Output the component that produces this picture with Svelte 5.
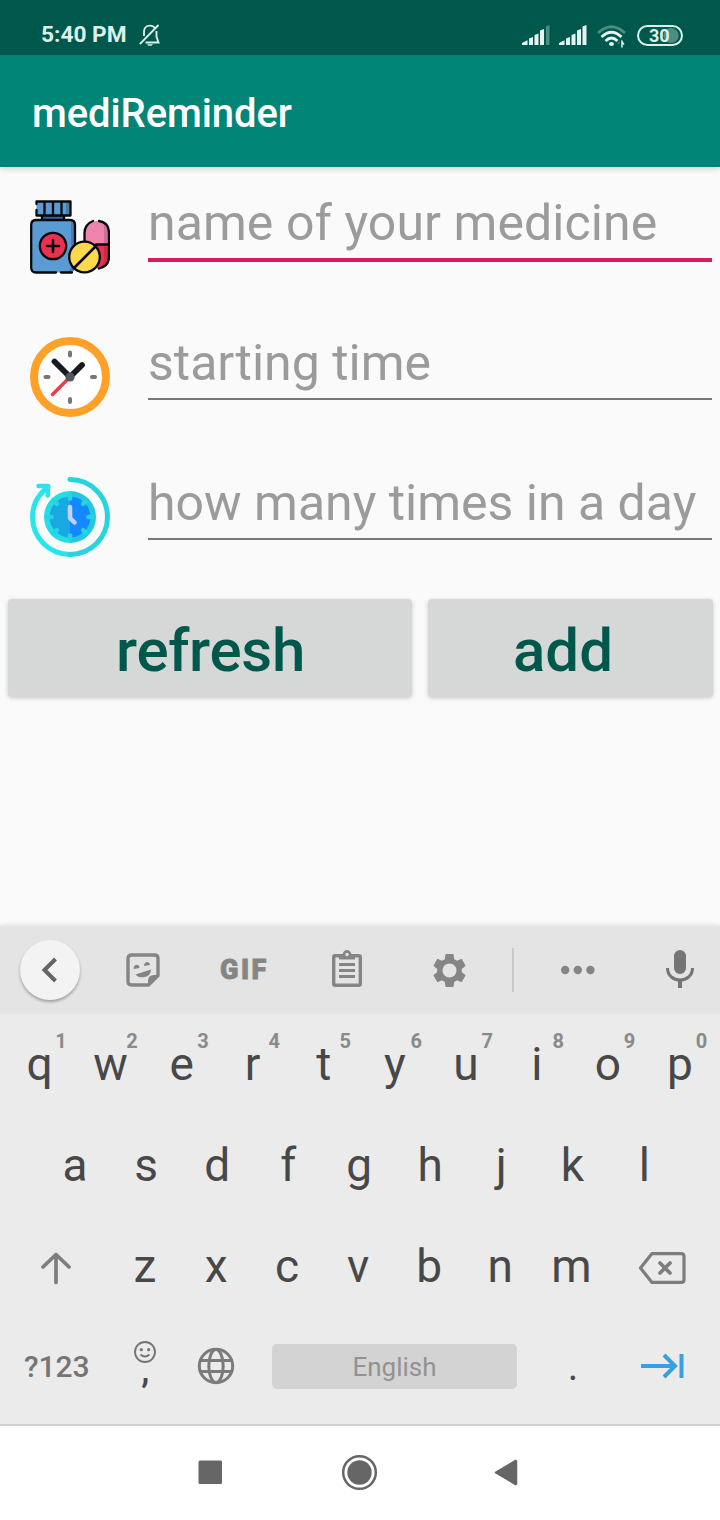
<script>
  const topKeys = [...'qwertyuiop'].map((letter, i) => ({ letter, digit: (i + 1) % 10 }));
  const homeKeys = [...'asdfghjkl'];
  const lowerKeys = [...'zxcvbnm'];
</script>

<div class="screen">
  <header class="status">
    <span class="time">5:40 PM</span>
    <svg class="bell" width="24" height="24" viewBox="0 0 24 24" fill="none" stroke="#dcefea" stroke-width="1.9">
      <path d="M17 5.2C15.8 3.4 14.100 2.600 12 2.600C8.100 2.600 6 5.400 6 9V13" />
      <path d="M18.500 8V13.500L20.500 19.500H7.500" />
      <path d="M1.800 21.200L20.500 2" />
      <path d="M9 21.300H15L13.500 22.700H10.500Z" fill="#dcefea" stroke="none" />
    </svg>
    <span class="space"></span>
    <svg width="28" height="21" viewBox="0 0 28 21" fill="#e4f5f1">
      <path d="M0 20V18L5.500 15.200V20ZM7 20V13.500L11 12V20ZM12.500 20V10L16.500 8.500V20ZM18 20V5.500L22 4V20Z" />
      <path d="M24 20V1.500L27.500 0V20Z" fill="#4b8d81" />
    </svg>
    <svg class="signal" width="28" height="21" viewBox="0 0 28 21" fill="#e4f5f1">
      <path d="M0 20V18L5.500 15.200V20ZM7 20V13.500L11 12V20ZM12.500 20V10L16.500 8.500V20ZM18 20V5.500L22 4V20ZM23.500 20V1.500L27.500 0V20Z" />
    </svg>
    <svg class="wifi" width="29" height="23" viewBox="0 0 29 23" fill="none" stroke="#e4f5f1" stroke-width="2.800">
      <path d="M1 8Q14.500-4.500 28 8" stroke="#4b8d81" />
      <path d="M4.500 12Q14.500 2.500 24.500 12M8.500 16Q14.500 10 20.500 16" />
      <ellipse cx="14.500" cy="19" rx="2.500" ry="2.100" fill="#e4f5f1" stroke="none" />
      <path d="M22.500 15.500L20.500 19H22.500Z" fill="#4b8d81" stroke="none" />
      <path d="M25 15.500V22.500V17L27 19.500" stroke-width="1.500" />
    </svg>
    <span class="battery">30</span>
  </header>

  <div class="appbar"><h1>mediReminder</h1></div>

  <main>
    <div class="entry">
      <svg width="80" height="80" viewBox="0 0 80 80" stroke="#07080c" stroke-width="2.300" stroke-linecap="round" stroke-linejoin="round">
        <rect x="12" y="18" width="22" height="6" fill="#445da3" />
        <path d="M6.500 4.500H40V18.500H6.500Z" fill="#5a9bd4" stroke="none" />
        <path d="M36 4H40.500V18.500H36Z" fill="#437fae" stroke="none" />
        <path d="M6.500 7V4.500H40.500V18.500H6.500V13M14.500 4.500V18M23 4.500V18M31.500 4.500V18" fill="none" />
        <rect x="1.200" y="23" width="43.800" height="52.500" rx="5" fill="#5a9bd4" stroke="none" />
        <path d="M41 24Q45 25 45 29V70Q45 75 40 75H37Q41 73 41 69Z" fill="#437fae" stroke="none" />
        <path d="M26 75.500H6Q1.200 75.500 1.200 70.500V28Q1.200 23 6 23H40Q45 23 45 28V51M31 75.500H42" fill="none" />
        <circle cx="23" cy="49" r="13.200" fill="#ec304f" />
        <path d="M23 43V55M17 49H29" stroke-width="2.600" />
        <path d="M54.500 47V34Q55.500 24 67 24Q79 24 79 36V60Q79 70 70 72L54.500 60Z" fill="#ee83ac" stroke="none" />
        <path d="M54.500 47H79V60Q79 71 68 72Z" fill="#ec304f" stroke="none" />
        <path d="M74 27Q79 30 79 37V60Q79 70 69 71Q76 66 74 57Z" fill="#111422" fill-opacity=".16" stroke="none" />
        <path d="M54.500 46V36C54.500 29 58 26 63 24M69 24C76 25 79 29 79 36V60C79 67 75 70 69 71.500M66 47.500H78" fill="none" />
        <circle cx="54.500" cy="60" r="15.300" fill="#fbd94b" />
        <path d="M44 71L66 49" stroke-width="2.700" />
      </svg>
      <div class="field active">name of your medicine</div>
    </div>
    <div class="entry">
      <svg width="80" height="80" viewBox="0 0 80 80" fill="none" stroke-linecap="round">
        <circle cx="40" cy="40" r="36" fill="#fff" stroke="#ffa028" stroke-width="8" />
        <g fill="#77777a">
          <rect x="38" y="13.500" width="4" height="7" rx="2" />
          <rect x="38" y="60" width="4" height="7" rx="2" />
          <rect x="13.500" y="38" width="7" height="4" rx="2" />
          <rect x="60" y="38" width="7" height="4" rx="2" />
        </g>
        <path d="M24.500 24.500L40 40L52 28" stroke="#171b20" stroke-width="5.800" />
        <path d="M22.500 57.500L39 41" stroke="#e3404c" stroke-width="3.500" />
        <circle cx="40" cy="40" r="4.600" fill="#55565a" />
      </svg>
      <div class="field">starting time</div>
    </div>
    <div class="entry">
      <svg width="80" height="80" viewBox="0 0 80 80" fill="none" stroke-linecap="round">
        <path d="M18 9.500L12 15.500C6 22 2.500 30 2.500 40A37.500 37.500 0 0 0 40 77.500" stroke="#26e5ef" stroke-width="5" />
        <path d="M40 2.500A37.500 37.500 0 0 1 40 77.500" stroke="#26d5df" stroke-width="5" />
        <path d="M8.500 9H17.800V18.500" stroke="#26e5ef" stroke-width="4.500" stroke-linejoin="round" />
        <path d="M40 14A26 26 0 0 0 40 66Z" fill="#26dce6" />
        <path d="M40 14A26 26 0 0 1 40 66Z" fill="#24c9de" />
        <path d="M40 19.500A20.500 20.500 0 0 0 40 60.500Z" fill="#18a9e5" />
        <path d="M40 19.500A20.500 20.500 0 0 1 40 60.500Z" fill="#1688ff" />
        <g stroke="#25d5e2" stroke-width="4.600">
          {#each [0, 45, 90, 135, 180, 225, 270, 315] as angle}
            <path d="M40 18V21.500" transform="rotate({angle} 40 40)" />
          {/each}
        </g>
        <path d="M40 30V41L44.500 45.500" stroke="#c7d2fa" stroke-width="4.500" stroke-linejoin="round" />
      </svg>
      <div class="field">how many times in a day</div>
    </div>
    <div class="actions">
      <button class="refresh">refresh</button>
      <button class="add">add</button>
    </div>
  </main>

  <section class="keyboard">
    <div class="tools">
      <span class="back">
        <svg width="60" height="60" viewBox="0 0 60 60" fill="none" stroke="#656565" stroke-width="4"><path d="M35.500 19L24.500 30L35.500 41" /></svg>
      </span>
      <svg class="sticker" width="34" height="34" viewBox="0 0 34 34" fill="#858585">
        <path d="M5.500 2H28.500Q32 2 32 5.500V22.500L22.500 32H5.500Q2 32 2 28.500V5.500Q2 2 5.500 2Z" fill="none" stroke="#858585" stroke-width="3.400" />
        <path d="M22 33V28Q22 22 28 22H33ZM9.500 21.500L25 16.500C25 25 13.500 26.500 9.500 21.500ZM7.500 16C7.500 10.500 13.500 10.500 13.500 15ZM18 13C18 7.500 24 8 24 12Z" />
      </svg>
      <span class="gif">GIF</span>
      <svg class="clip" width="30" height="38" viewBox="0 0 30 38" fill="none" stroke="#858585">
        <rect x="1.700" y="5.700" width="26.600" height="29.600" rx="1.500" stroke-width="3.400" />
        <path d="M7 4.500H10.500Q11.500 0 15 0Q18.500 0 19.500 4.500H23V9.500H7Z" fill="#858585" stroke="none" />
        <circle cx="15" cy="4.500" r="1.700" fill="#e4e4e4" stroke="none" />
        <path d="M7 14.500H23M7 20.500H23M7 26.500H23" stroke-width="3" />
      </svg>
      <svg class="gear" width="41" height="41" viewBox="0 0 24 24" fill="#858585">
        <path d="M19.140 12.940c.04-.3.060-.61.060-.94s-.02-.64-.07-.94l2.030-1.580c.18-.14.230-.41.120-.61l-1.920-3.320c-.12-.22-.37-.29-.59-.22l-2.390.96c-.5-.38-1.030-.7-1.620-.94L14.400 2.810c-.04-.24-.24-.41-.48-.41h-3.840c-.24 0-.43.170-.47.410L9.250 5.350c-.59.240-1.130.57-1.620.94l-2.390-.96c-.22-.08-.47 0-.59.220L2.740 8.870c-.12.210-.08.470.12.610l2.030 1.580C4.840 11.360 4.800 11.690 4.800 12s.02.640.07.940l-2.030 1.580c-.18.140-.23.410-.12.610l1.920 3.320c.12.220.37.290.59.220l2.390-.96c.5.380 1.030.7 1.620.94l.36 2.540c.05.240.24.410.48.410h3.840c.24 0 .44-.17.470-.41l.36-2.540c.59-.24 1.130-.56 1.620-.94l2.390.96c.22.080.47 0 .59-.22l1.920-3.320c.12-.22.070-.47-.12-.61L19.140 12.940zM12 16.100a4.100 4.100 0 1 1 0-8.200a4.100 4.100 0 0 1 0 8.200z" />
      </svg>
      <span class="divider"></span>
      <svg class="dots" width="34" height="10" viewBox="0 0 34 10" fill="#858585"><circle cx="4.200" cy="5" r="4.200" /><circle cx="16.800" cy="5" r="4.200" /><circle cx="29.400" cy="5" r="4.200" /></svg>
      <svg class="mic" width="28" height="38" viewBox="0 0 28 38" fill="none" stroke="#757575">
        <rect x="8" y="0" width="12" height="24" rx="6" fill="#757575" stroke="none" />
        <path d="M1.500 18C1.500 34 26.500 34 26.500 18" stroke-width="3" /><path d="M14 30V38" stroke-width="4" />
      </svg>
    </div>

    <div class="row">
      {#each topKeys as key}
        <span class="key">{key.letter}<small>{key.digit}</small></span>
      {/each}
    </div>
    <div class="row home">
      {#each homeKeys as letter}<span class="key">{letter}</span>{/each}
    </div>
    <div class="row">
      <span class="key shift">
        <svg width="34" height="34" viewBox="0 0 34 34" fill="none" stroke="#7d7d7d" stroke-width="3.700" stroke-linecap="round" stroke-linejoin="round"><path d="M17 31.500V3.500M4 16L17 3.500L30 16" /></svg>
      </span>
      {#each lowerKeys as letter}<span class="key">{letter}</span>{/each}
      <span class="key delete">
        <svg width="48" height="34" viewBox="0 0 48 34" fill="none" stroke="#7d7d7d" stroke-width="3.200" stroke-linejoin="round"><path d="M14 2.600H43Q46 2.600 46 5.600V28.400Q46 31.400 43 31.400H14L2.500 17Z" /><path d="M22 12L32 22M32 12L22 22" stroke-width="3.700" stroke-linecap="round" /></svg>
      </span>
    </div>
    <div class="row bottom">
      <span class="key symbols">?123</span>
      <span class="key comma">
        <svg width="24" height="24" viewBox="0 0 24 24" fill="none" stroke="#757575" stroke-width="1.900"><circle cx="12" cy="12" r="10" /><path d="M7.500 14.500Q12 18.500 16.500 14.500" /><circle cx="8.300" cy="9.700" r="1.600" fill="#757575" stroke="none" /><circle cx="15.700" cy="9.700" r="1.600" fill="#757575" stroke="none" /></svg>
        <span>,</span>
      </span>
      <span class="key globe">
        <svg width="38" height="38" viewBox="0 0 38 38" fill="none" stroke="#7b7b7b" stroke-width="3"><circle cx="19" cy="19" r="16.700" /><ellipse cx="19" cy="19" rx="7.200" ry="16.500" /><path d="M4 13.500H34M4 24.500H34" /></svg>
      </span>
      <span class="spacebar">English</span>
      <span class="key period">.</span>
      <span class="key next">
        <svg width="44" height="26" viewBox="0 0 44 26" fill="none" stroke="#39a0dc" stroke-width="4"><path d="M0 13H34M23 2L34 13L23 24M40.500 1V25" /></svg>
      </span>
    </div>
  </section>

  <nav>
    <svg width="720" height="94" viewBox="0 0 720 94" fill="#666">
      <rect x="198.500" y="34.500" width="23.500" height="23.500" rx="1.500" />
      <circle cx="359.500" cy="46.500" r="12.200" /><circle cx="359.500" cy="46.500" r="16.300" fill="none" stroke="#666" stroke-width="2.500" />
      <path d="M495.500 46.500L515.500 34.500L516.500 35V58L515.500 58.500Z" stroke="#666" stroke-width="1.500" stroke-linejoin="round" />
    </svg>
  </nav>
</div>

<style>
  :global(body) { margin: 0; }
  .screen, .screen * { box-sizing: border-box; }
  .screen { width: 720px; height: 1520px; display: flex; flex-direction: column; background: #fafafa; font-family: Roboto, sans-serif; overflow: hidden; }
  svg { display: block; flex: none; }
  .status { height: 55px; flex: none; background: #00574b; display: flex; align-items: center; padding: 15px 37px 0 41px; color: #dcefea; }
  .time { width: 86px; font-size: 22.700px; font-weight: 700; line-height: 40px; white-space: nowrap; }
  .bell { margin-left: 11px; }
  .space { flex: 1; }
  .signal { margin-left: 9px; }
  .wifi { margin: 2px 1px 0 10px; }
  .battery { width: 46px; height: 21px; margin-left: 10px; border: 2px solid #dcefea; border-radius: 11px; font-size: 18px; font-weight: 700; line-height: 17px; padding-left: 10px; background: radial-gradient(circle at 32px 50%, #4b8d81 7px, transparent 8px); }
  .appbar { height: 112px; flex: none; position: relative; background: #008577; box-shadow: 0 1px 7px rgba(0, 0, 0, .2); clip-path: inset(0 0 -12px); display: flex; align-items: center; padding: 6px 32px 0; }
  h1 { margin: 0; color: #fff; font-size: 40px; font-weight: 500; line-height: 48px; letter-spacing: -.1px; }
  main { height: 759px; flex: none; }
  .entry { height: 140px; padding: 30px 8px 0 30px; display: flex; }
  .field { margin-left: 38px; width: 564px; height: 63px; border-bottom: 2px solid #777; color: #9b9b9b; font-size: 50px; line-height: 52px; white-space: nowrap; }
  .field.active { height: 65px; border-bottom: 4px solid #d81b60; letter-spacing: .07px; }
  .actions { padding: 12px 8px 0; display: grid; grid-template-columns: 404px 285px; gap: 16px; }
  button { height: 98px; border: 0; border-radius: 4px; padding: 5px 0 0; background: #d6d8d7; color: #00574b; font: 500 60px/90px Roboto, sans-serif; box-shadow: 0 1px 4px rgba(0, 0, 0, .2); }
  .refresh { letter-spacing: -.3px; padding-left: 1px; }
  .add { padding-right: 15px; }
  .keyboard { height: 500px; flex: none; background: #ebebeb; border-bottom: 2px solid #d0d0d0; box-shadow: 0 0 6px rgba(0, 0, 0, .15); color: #484848; }
  .tools { height: 88px; background: #e4e4e4; display: flex; align-items: center; padding-left: 20px; }
  .back { width: 60px; height: 60px; border-radius: 50%; background: #f3f3f3; box-shadow: 0 2px 3px rgba(0, 0, 0, .3); }
  .sticker { margin-left: 46px; }
  .gif { width: 50px; margin-left: 60px; color: #858585; font-size: 27px; font-weight: 900; letter-spacing: 2.500px; -webkit-text-stroke: .8px #858585; }
  .clip { margin: -3px 0 0 62px; }
  .gear { margin: 1px 0 0 67px; }
  .divider { width: 2px; height: 44px; margin-left: 42px; background: #c8cbcc; }
  .dots { margin-left: 47px; }
  .mic { margin: -2px 0 0 71px; }
  .row { height: 101px; padding-left: 4px; display: flex; }
  .home { padding-left: 39.500px; }
  .key { position: relative; flex: none; width: 71.050px; padding-bottom: 2px; display: flex; align-items: center; justify-content: center; font-size: 46px; line-height: 50px; }
  .row:not(.bottom) .key:last-child:not(.delete) { width: 73px; }
  .key.shift { width: 105.500px; padding: 2px 1px 0 0; }
  .key.delete { width: 110px; padding: 2px 0 0; }
  small { position: absolute; left: 51px; top: 15px; width: 12px; text-align: center; color: #8a8a8a; font-size: 20px; font-weight: 700; line-height: 24px; }
  .key:last-child small { left: 52px; }
  .bottom { display: grid; grid-template-columns: 105.500px 71.500px 71px 285px 71px 1fr; }
  .bottom .key { width: auto; }
  .symbols { color: #757575; font-size: 30px; font-weight: 500; }
  .key.comma { flex-direction: column; justify-content: flex-start; padding-top: 23px; }
  .comma span { font-size: 36px; font-weight: 500; line-height: 12px; }
  .key.globe { padding: 0 2px 4px 0; }
  .spacebar { width: 245px; height: 45px; margin: 27px 0 0 20px; border-radius: 5px; background: #d3d3d3; color: #929292; text-align: center; font-size: 26px; line-height: 47px; }
  .key.period { font-size: 40px; padding-left: 1px; }
  .key.next { padding: 0 2px 3px 0; }
  nav { height: 94px; background: #fff; }
</style>
